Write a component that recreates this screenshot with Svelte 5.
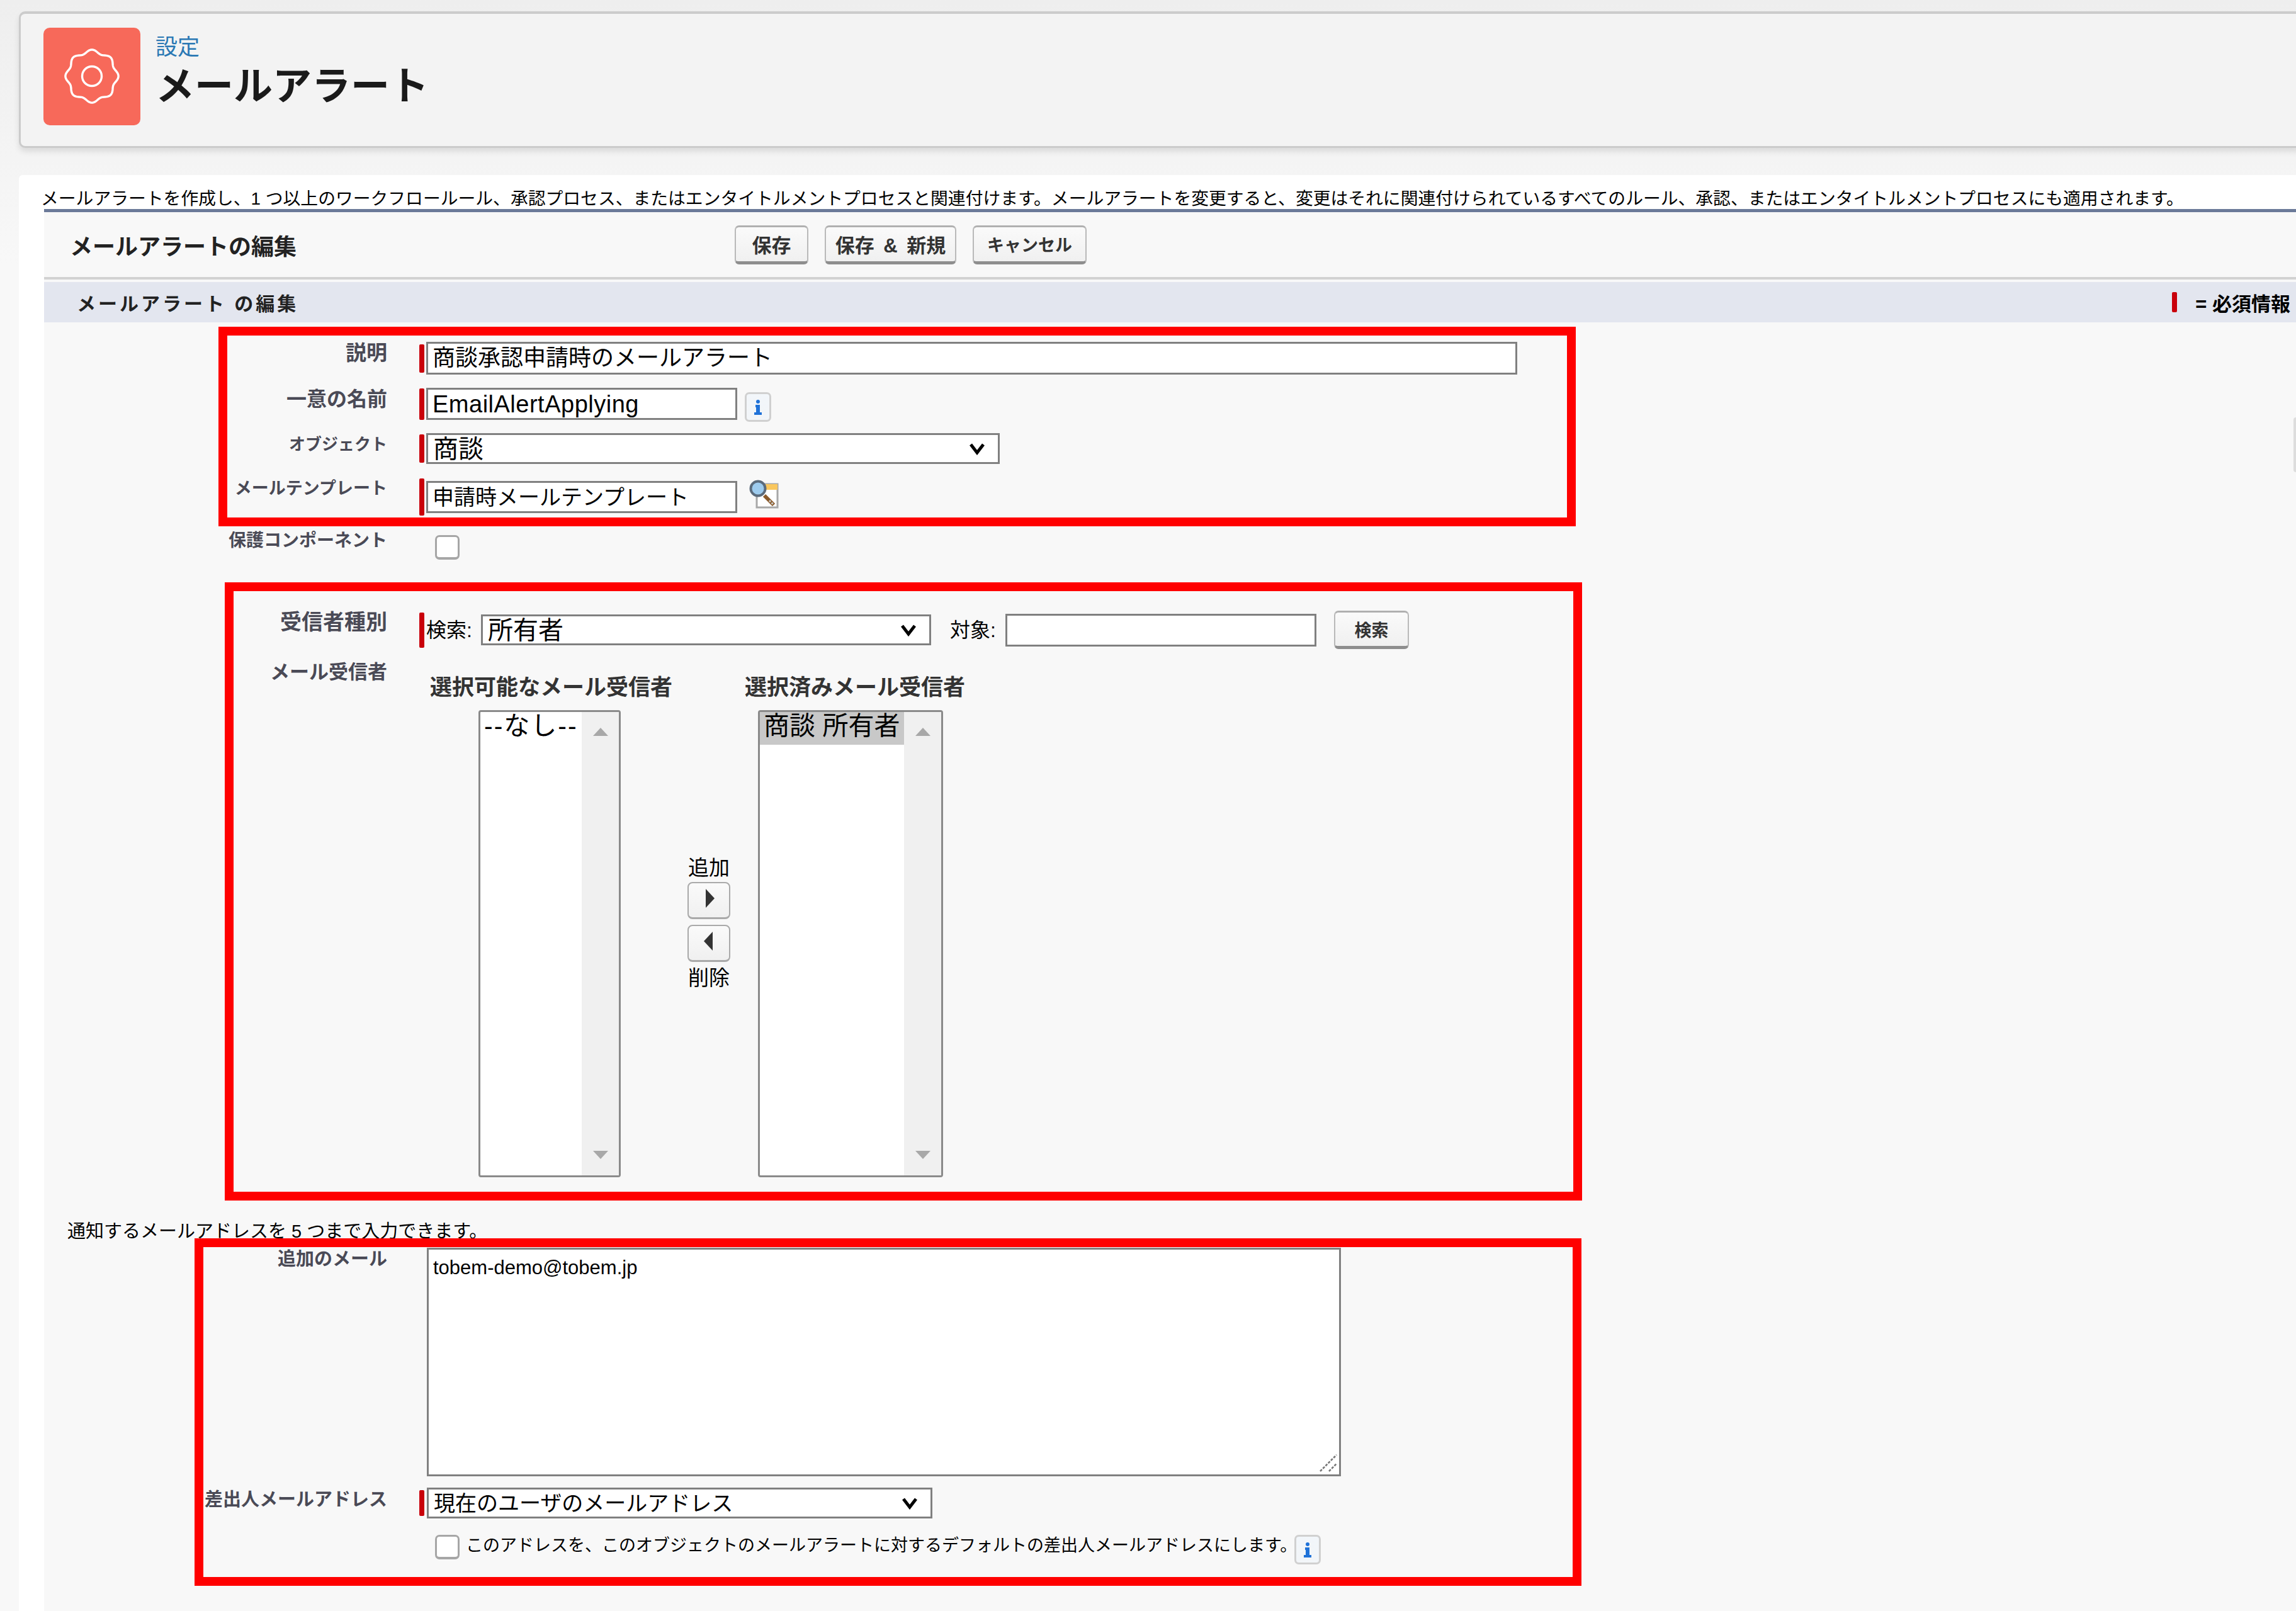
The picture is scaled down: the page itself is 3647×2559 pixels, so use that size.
<script>
  // red annotation rectangles drawn over the form
  const marks = [
    { x: 347, y: 519, w: 2156, h: 317 },
    { x: 357, y: 925, w: 2156, h: 982 },
    { x: 309, y: 1967, w: 2203, h: 552 }
  ];

  // wavy gear outline, centred on 0,0
  function gearPath(radius, depth, teeth) {
    const pts = [];
    for (let i = 0; i < 192; i++) {
      const a = (i / 192) * Math.PI * 2;
      const r = radius + depth * Math.cos(teeth * a);
      pts.push(`${(r * Math.sin(a)).toFixed(2)} ${(-r * Math.cos(a)).toFixed(2)}`);
    }
    return 'M' + pts.join('L') + 'Z';
  }
  const gear = gearPath(39.5, 2.6, 8);
</script>

<div class="page">
  <header class="head">
    <div class="head-icon">
      <svg width="100" height="100" viewBox="-50 -50 100 100" fill="none" stroke="#fff" stroke-width="3.4">
        <path d={gear} />
        <circle r="15.5" />
      </svg>
    </div>
    <div class="head-text">
      <div class="crumb">設定</div>
      <h1>メールアラート</h1>
    </div>
  </header>

  <main class="panel">
    <p class="intro">メールアラートを作成し、1 つ以上のワークフロールール、承認プロセス、またはエンタイトルメントプロセスと関連付けます。メールアラートを変更すると、変更はそれに関連付けられているすべてのルール、承認、またはエンタイトルメントプロセスにも適用されます。</p>

    <section class="form">
      <div class="title-row">
        <h2>メールアラートの編集</h2>
        <div class="actions">
          <button class="btn save">保存</button>
          <button class="btn save-new">保存 &amp; 新規</button>
          <button class="btn cancel">キャンセル</button>
        </div>
      </div>

      <div class="section-bar">
        <h3>メールアラート の編集</h3>
        <div class="legend"><span class="legend-bar"></span><span>= 必須情報</span></div>
      </div>

      <div class="body">
        <div class="row r-desc">
          <div class="label f33">説明</div>
          <div class="field">
            <span class="req h45"></span>
            <div class="input w-desc">商談承認申請時のメールアラート</div>
          </div>
        </div>

        <div class="row r-name">
          <div class="label f32">一意の名前</div>
          <div class="field">
            <span class="req h50"></span>
            <div class="input w-short latin">EmailAlertApplying</div>
            <span class="info name-info">
              <svg width="16" height="26" viewBox="0 0 16 26" fill="#1f72d8"><circle cx="8" cy="4" r="3" /><path d="M4 9h7v12h3v4H2v-4h3v-8H4z" /></svg>
            </span>
          </div>
        </div>

        <div class="row r-object">
          <div class="label f26">オブジェクト</div>
          <div class="field">
            <span class="req h45"></span>
            <div class="select-wrap w-object">
              <select><option>商談</option></select>
              <svg class="chev" width="24" height="20" viewBox="0 0 24 20" fill="none" stroke="#000" stroke-width="5"><path d="M2 3l10 13L22 3" /></svg>
            </div>
          </div>
        </div>

        <div class="row r-template">
          <div class="label">メールテンプレート</div>
          <div class="field">
            <span class="req h59"></span>
            <div class="input w-short narrow">申請時メールテンプレート</div>
            <svg class="lookup" width="48" height="50" viewBox="0 0 48 50">
              <rect x="12" y="8" width="33" height="37" fill="#fff" stroke="#a8a8a8" stroke-width="3" />
              <rect x="26" y="8" width="19" height="9" fill="#f9c75e" />
              <path d="M24 26l15 15" stroke="#8a5a2a" stroke-width="6" />
              <path d="M32 34l6 6" stroke="#c9c9c9" stroke-width="3" stroke-dasharray="3 2" />
              <circle cx="14" cy="15" r="11.5" fill="#9dcbee" stroke="#5b6b7c" stroke-width="4" />
            </svg>
          </div>
        </div>

        <div class="row r-protect">
          <div class="label f28">保護コンポーネント</div>
          <div class="field check-field">
            <input type="checkbox" class="check" />
          </div>
        </div>

        <div class="row r-type">
          <div class="label f34">受信者種別</div>
          <div class="field search-field">
            <span class="req h56"></span>
            <span class="inline-label find-label">検索:</span>
            <div class="select-wrap w-type">
              <select><option>所有者</option></select>
              <svg class="chev" width="24" height="20" viewBox="0 0 24 20" fill="none" stroke="#000" stroke-width="5"><path d="M2 3l10 13L22 3" /></svg>
            </div>
            <span class="inline-label target">対象:</span>
            <div class="input w-target"></div>
            <button class="btn find">検索</button>
          </div>
        </div>

        <div class="row r-lists">
          <div class="label f31">メール受信者</div>
          <div class="picker">
            <div class="pick-col">
              <div class="pick-head">選択可能なメール受信者</div>
              <div class="listbox left-list">
                <div class="options"><div class="opt none">--なし--</div></div>
                <div class="scroll">
                  <span class="arrow up"></span>
                  <span class="arrow down"></span>
                </div>
              </div>
            </div>
            <div class="mover">
              <span>追加</span>
              <button class="move" aria-label="追加"><span class="tri right"></span></button>
              <button class="move" aria-label="削除"><span class="tri left"></span></button>
              <span>削除</span>
            </div>
            <div class="pick-col chosen">
              <div class="pick-head">選択済みメール受信者</div>
              <div class="listbox right-list">
                <div class="options"><div class="opt selected">商談 所有者</div></div>
                <div class="scroll">
                  <span class="arrow up"></span>
                  <span class="arrow down"></span>
                </div>
              </div>
            </div>
          </div>
        </div>

        <p class="note">通知するメールアドレスを 5 つまで入力できます。</p>

        <div class="row r-extra">
          <div class="label f29">追加のメール</div>
          <div class="area-wrap">
            <textarea readonly>tobem-demo@tobem.jp</textarea>
            <svg class="grip" width="30" height="30" viewBox="0 0 30 30" stroke="#777" stroke-width="2.6" stroke-dasharray="4 2"><path d="M2 28L28 2M16 28L28 16" /></svg>
          </div>
        </div>

        <div class="row r-sender">
          <div class="label f29">差出人メールアドレス</div>
          <div class="field">
            <span class="req h41"></span>
            <div class="select-wrap w-sender">
              <select><option>現在のユーザのメールアドレス</option></select>
              <svg class="chev" width="24" height="20" viewBox="0 0 24 20" fill="none" stroke="#000" stroke-width="5"><path d="M2 3l10 13L22 3" /></svg>
            </div>
          </div>
        </div>

        <div class="row r-default">
          <div></div>
          <div class="field check-field">
            <input type="checkbox" class="check" />
            <span class="default-text">このアドレスを、このオブジェクトのメールアラートに対するデフォルトの差出人メールアドレスにします。</span>
            <span class="info default-info">
              <svg width="16" height="26" viewBox="0 0 16 26" fill="#1f72d8"><circle cx="8" cy="4" r="3" /><path d="M4 9h7v12h3v4H2v-4h3v-8H4z" /></svg>
            </span>
          </div>
        </div>
      </div>
    </section>
  </main>

  <span class="edge-tab"></span>

  {#each marks as m}
    <div class="mark" style="left: {m.x}px; top: {m.y}px; width: {m.w}px; height: {m.h}px;"></div>
  {/each}
</div>

<style>
  :global(body) {
    margin: 0;
  }

  .page {
    position: relative;
    display: flex;
    flex-direction: column;
    width: 3647px;
    height: 2559px;
    overflow: hidden;
    background: linear-gradient(180deg, #eeeeee 0, #f8f8f8 420px);
    font-family: "Liberation Sans", "Noto Sans CJK JP", sans-serif;
    color: #000;
  }

  /* page header */
  .head {
    display: flex;
    align-items: center;
    gap: 24px;
    height: 217px;
    box-sizing: border-box;
    margin: 18px -12px 0 30px;
    padding-left: 36px;
    background: #f3f3f3;
    border: 3px solid #cbcbcb;
    border-top-width: 4px;
    border-radius: 10px;
    box-shadow: 0 6px 10px rgba(0, 0, 0, 0.1);
  }

  .head-icon {
    display: flex;
    align-items: center;
    justify-content: center;
    width: 154px;
    height: 155px;
    margin-bottom: 12px;
    background: #f7695a;
    border-radius: 10px;
  }

  .head-text {
    margin-top: -27px;
  }

  .crumb {
    font-size: 35px;
    line-height: 42px;
    color: #2a78b4;
  }

  h1 {
    margin: 6px 0 0;
    font-size: 62px;
    line-height: 72px;
    font-weight: 700;
    color: #1a1a1a;
  }

  /* white panel */
  .panel {
    flex: 1;
    display: flex;
    flex-direction: column;
    min-height: 0;
    margin: 43px 0 0 30px;
    padding: 22px 0 0 39px;
    background: #fff;
    border-radius: 6px 0 0 0;
  }

  .intro {
    margin: 0 0 0 -4px;
    font-size: 27.8px;
    line-height: 32px;
    height: 32px;
    white-space: nowrap;
  }

  .form {
    flex: 1;
    margin-left: 1px;
    background: #f8f8f8;
    border-top: 5px solid #6b7a99;
  }

  .title-row {
    display: flex;
    align-items: center;
    height: 107px;
    box-sizing: border-box;
    padding-left: 41px;
    border-bottom: 4px solid #d2d2d2;
  }

  h2 {
    width: 1056px;
    margin: 0;
    font-size: 36px;
    font-weight: 700;
    color: #222;
  }

  .actions {
    display: flex;
    gap: 26px;
  }

  .btn {
    height: 62px;
    padding: 0;
    font-family: inherit;
    font-size: 27px;
    font-weight: 700;
    color: #333;
    background: linear-gradient(180deg, #fafafa, #f0f0f0);
    border: 2px solid #b9b9b9;
    border-bottom: 5px solid #8e8e8e;
    border-top: 3px solid #b0b0b0;
    border-radius: 7px;
  }

  .save { width: 117px; font-size: 31px; }
  .save-new { width: 209px; font-size: 31px; word-spacing: 6px; }
  .cancel { width: 181px; }

  .section-bar {
    display: flex;
    align-items: center;
    justify-content: space-between;
    height: 64px;
    margin-top: 4px;
    padding: 0 9px 0 52px;
    background: #e3e6ef;
  }

  h3 {
    margin: 0;
    font-size: 30px;
    font-weight: 700;
    letter-spacing: 4px;
    color: #222;
  }

  .legend {
    display: flex;
    align-items: center;
    gap: 29px;
    font-size: 31px;
    font-weight: 700;
  }

  .legend-bar {
    width: 8px;
    height: 32px;
    background: #c9000b;
    border-radius: 2px;
  }

  /* form rows */
  .body {
    padding-top: 31px;
  }

  .row {
    display: grid;
    grid-template-columns: 545px 1fr;
    column-gap: 51px;
  }

  .r-desc { height: 52px; }
  .r-name { height: 51px; margin-top: 21px; }
  .r-object { height: 49px; margin-top: 21px; }
  .r-template { height: 52px; margin-top: 26px; }
  .r-protect { height: 39px; margin-top: 35px; }
  .r-type { margin-top: 81px; }
  .r-lists { margin-top: 19px; }
  .r-extra { margin-top: 10px; }
  .r-sender { height: 49px; margin-top: 18px; }
  .r-default { height: 40px; margin-top: 26px; }

  .label {
    margin-top: 2px;
    font-size: 27px;
    line-height: 32px;
    font-weight: 700;
    text-align: right;
    color: #4a4a56;
    white-space: nowrap;
  }

  .f26 { font-size: 26px; }
  .f28 { font-size: 28px; }
  .f29 { font-size: 29px; }
  .f31 { font-size: 31px; }
  .f32 { font-size: 32px; }
  .f33 { font-size: 33px; }
  .f34 { font-size: 34px; }

  .r-template .label { margin-top: -3px; }
  .r-protect .label { margin-top: -7px; }
  .r-sender .label { margin-top: 3px; }

  .field {
    display: flex;
    align-items: center;
  }

  .req {
    flex: none;
    width: 8px;
    margin-right: 3px;
    background: #c9000b;
    border-radius: 2px;
  }

  .h41 { height: 41px; }
  .h45 { height: 45px; }
  .h50 { height: 50px; }
  .h56 { height: 56px; }
  .h59 { height: 59px; margin-block: -4px; }

  .input {
    box-sizing: border-box;
    padding-left: 7px;
    font-size: 36px;
    line-height: 46px;
    background: #fff;
    border: 3px solid #808080;
    white-space: nowrap;
    overflow: hidden;
  }

  .latin {
    font-size: 38px;
    letter-spacing: 0.5px;
  }

  .narrow {
    font-size: 34px;
  }

  .w-desc { width: 1733px; height: 52px; }
  .w-short { width: 494px; height: 51px; }
  .w-target { width: 494px; height: 52px; }

  .info {
    display: flex;
    align-items: center;
    justify-content: center;
    flex: none;
    box-sizing: border-box;
    width: 42px;
    height: 47px;
    margin-left: 9px;
    background: linear-gradient(180deg, #f2f6fa, #f2f5f8);
    border: 3px solid #d0d0d0;
    border-radius: 7px;
  }

  .name-info {
    margin: 5px 0 -5px 12px;
  }

  .default-info {
    margin-left: -4px;
  }

  .lookup {
    flex: none;
    margin: -3px 0 3px 19px;
  }

  .select-wrap {
    position: relative;
    height: 49px;
  }

  select {
    appearance: none;
    display: block;
    box-sizing: border-box;
    width: 100%;
    height: 100%;
    padding: 0 0 0 8px;
    font-family: inherit;
    font-size: 40px;
    color: #000;
    background: #fff;
    border: 3px solid #808080;
    border-radius: 0;
  }

  .chev {
    position: absolute;
    top: 15px;
    right: 24px;
  }

  .w-object { width: 911px; }
  .w-type { width: 715px; }
  .w-sender { width: 803px; margin-left: 1px; }
  .w-sender select { font-size: 34px; }

  .check-field {
    padding-left: 25px;
  }

  .r-default .field {
    align-items: flex-start;
  }

  .check {
    appearance: none;
    flex: none;
    width: 39px;
    height: 39px;
    margin: 0;
    background: #fff;
    border: 3px solid #a6a6a6;
    border-bottom-width: 4px;
    border-radius: 7px;
  }

  .search-field {
    height: 61px;
  }

  .inline-label {
    font-size: 32px;
    line-height: 40px;
    white-space: nowrap;
  }

  .find-label {
    width: 87px;
  }

  .target {
    width: 88px;
    margin-left: 30px;
  }

  .find {
    width: 119px;
    height: 61px;
    margin-left: 28px;
  }

  /* recipient picker */
  .picker {
    display: grid;
    grid-template-columns: 409px 68px 1fr;
    margin-left: 17px;
    padding-top: 26px;
  }

  .pick-head {
    height: 32px;
    font-size: 35px;
    line-height: 32px;
    font-weight: 700;
    color: #333;
    white-space: nowrap;
  }

  .listbox {
    display: flex;
    box-sizing: border-box;
    height: 742px;
    margin-top: 20px;
    background: #fff;
    border: 3px solid #8a8a8a;
    border-radius: 4px;
  }

  .left-list {
    width: 226px;
    margin-left: 77px;
  }

  .right-list {
    width: 294px;
    margin-left: 21px;
  }

  .chosen {
    padding-left: 23px;
  }

  .options {
    flex: 1;
  }

  .opt {
    height: 52px;
    padding-left: 6px;
    font-size: 41px;
    line-height: 44px;
    white-space: nowrap;
  }

  .none {
    letter-spacing: 2px;
  }

  .selected {
    background: #c8c8c8;
  }

  .scroll {
    display: flex;
    flex-direction: column;
    align-items: center;
    justify-content: space-between;
    flex: none;
    width: 59px;
    box-sizing: border-box;
    padding: 25px 0 26px;
    background: #f0f0f0;
  }

  .arrow {
    width: 0;
    height: 0;
    border-left: 12px solid transparent;
    border-right: 12px solid transparent;
  }

  .up { border-bottom: 13px solid #a8a8a8; }
  .down { border-top: 13px solid #a8a8a8; }

  .mover {
    display: flex;
    flex-direction: column;
    align-items: center;
    margin-top: 287px;
    font-size: 33px;
    line-height: 32px;
  }

  .move {
    display: flex;
    align-items: center;
    justify-content: center;
    width: 68px;
    height: 59px;
    padding: 0;
    background: linear-gradient(180deg, #fafafa, #f0f0f0);
    border: 2px solid #a9a9a9;
    border-bottom-width: 3px;
    border-radius: 8px;
  }

  .mover span:first-child { margin-bottom: 6px; }
  .mover .move + .move { margin-top: 9px; margin-bottom: 10px; }

  .tri {
    width: 0;
    height: 0;
    border-top: 15px solid transparent;
    border-bottom: 15px solid transparent;
  }

  .tri.right { border-left: 14px solid #333; margin-left: 3px; }
  .tri.left { border-right: 14px solid #333; margin-right: 3px; }

  .note {
    height: 32px;
    margin: 70px 0 0 37px;
    font-size: 29px;
    line-height: 32px;
    white-space: nowrap;
  }

  .area-wrap {
    position: relative;
    width: 1452px;
    height: 363px;
    margin-left: 12px;
  }

  textarea {
    display: block;
    box-sizing: border-box;
    width: 100%;
    height: 100%;
    padding: 11px 7px;
    font-family: "Liberation Sans", sans-serif;
    font-size: 31px;
    line-height: 36px;
    color: #000;
    background: #fff;
    border: 3px solid #808080;
    border-radius: 0;
    resize: none;
    outline: none;
  }

  .grip {
    position: absolute;
    right: 5px;
    bottom: 6px;
  }

  .default-text {
    margin-left: 10px;
    font-size: 27px;
    line-height: 34px;
    white-space: nowrap;
  }

  .edge-tab {
    position: absolute;
    right: 0;
    top: 663px;
    width: 4px;
    height: 87px;
    background: #dddddd;
    border-radius: 4px 0 0 4px;
  }

  .mark {
    position: absolute;
    box-sizing: border-box;
    border: 14px solid #ff0000;
    pointer-events: none;
  }
</style>
